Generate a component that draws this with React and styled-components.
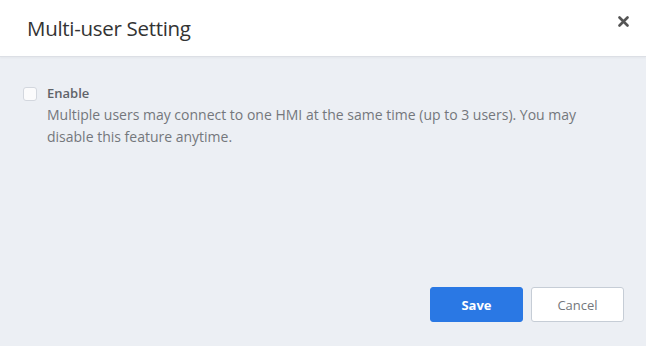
import React, { useState } from "react";
import styled, { createGlobalStyle } from "styled-components";

const GlobalStyle = createGlobalStyle`
  html, body {
    margin: 0;
    padding: 0;
    height: 100%;
  }
  body {
    font-family: "Open Sans", "Liberation Sans", sans-serif;
    background: #eceff4;
  }
  #root {
    height: 100%;
  }
`;

const Modal = styled.div`
  display: flex;
  flex-direction: column;
  width: 646px;
  height: 346px;
  background: #eceff4;
`;

const Header = styled.div`
  display: flex;
  align-items: center;
  justify-content: space-between;
  height: 56px;
  padding: 0 15px 0 27px;
  background: #fff;
  border-bottom: 1px solid #dcdfe5;
  box-shadow: 0 1px 2px rgba(0, 0, 0, 0.04);
`;

const Title = styled.h2`
  margin: 0;
  font-family: "Open Sans", "Liberation Sans", sans-serif;
  font-weight: 400;
  font-size: 20.5px;
  letter-spacing: -0.3px;
  color: #333;
`;

const CloseButton = styled.button`
  display: flex;
  align-items: center;
  justify-content: center;
  width: 16px;
  height: 16px;
  padding: 0;
  margin-top: -14px;
  border: none;
  background: none;
  cursor: pointer;
`;

const Body = styled.div`
  flex: 1;
  display: flex;
  flex-direction: column;
  padding: 27px 22px 24px 23px;
`;

const Option = styled.label`
  display: flex;
  gap: 10px;
  cursor: pointer;
`;

const Box = styled.input`
  appearance: none;
  flex: none;
  width: 14px;
  height: 14px;
  margin: 3px 0 0;
  border: 1px solid #d3d7de;
  border-radius: 3px;
  background: #fbfbfc;
  cursor: pointer;

  &:checked {
    background: #2a78e4;
    border-color: #2a78e4;
  }
`;

const Text = styled.div`
  display: flex;
  flex-direction: column;
`;

const Label = styled.span`
  font-size: 13px;
  font-weight: 600;
  line-height: 18px;
  color: #5f6369;
`;

const Desc = styled.p`
  margin: 2px 0 0;
  font-size: 14px;
  line-height: 22px;
  color: #74777c;
  max-width: 545px;
`;

const Footer = styled.div`
  margin-top: auto;
  display: flex;
  justify-content: flex-end;
  gap: 8px;
`;

const Button = styled.button`
  width: 93px;
  height: 35px;
  border-radius: 3px;
  font-family: "Open Sans", "Liberation Sans", sans-serif;
  font-size: 13px;
  cursor: pointer;
  border: 1px solid ${(p) => (p.$primary ? "#2a78e4" : "#c6cdd6")};
  background: ${(p) => (p.$primary ? "#2a78e4" : "#fff")};
  color: ${(p) => (p.$primary ? "#fff" : "#74777c")};
  font-weight: ${(p) => (p.$primary ? 700 : 400)};
`;

export default function App() {
  const [enabled, setEnabled] = useState(false);

  return (
    <>
      <GlobalStyle />
      <Modal>
        <Header>
          <Title>Multi-user Setting</Title>
          <CloseButton aria-label="Close">
            <svg width="11" height="11" viewBox="0 0 11 11">
              <path
                d="M1.5 1.5 L9.5 9.5 M9.5 1.5 L1.5 9.5"
                stroke="#555"
                strokeWidth="2.6"
                strokeLinecap="round"
              />
            </svg>
          </CloseButton>
        </Header>
        <Body>
          <Option>
            <Box
              type="checkbox"
              checked={enabled}
              onChange={(e) => setEnabled(e.target.checked)}
            />
            <Text>
              <Label>Enable</Label>
              <Desc>
                Multiple users may connect to one HMI at the same time (up to 3
                users). You may disable this feature anytime.
              </Desc>
            </Text>
          </Option>
          <Footer>
            <Button $primary>Save</Button>
            <Button>Cancel</Button>
          </Footer>
        </Body>
      </Modal>
    </>
  );
}
